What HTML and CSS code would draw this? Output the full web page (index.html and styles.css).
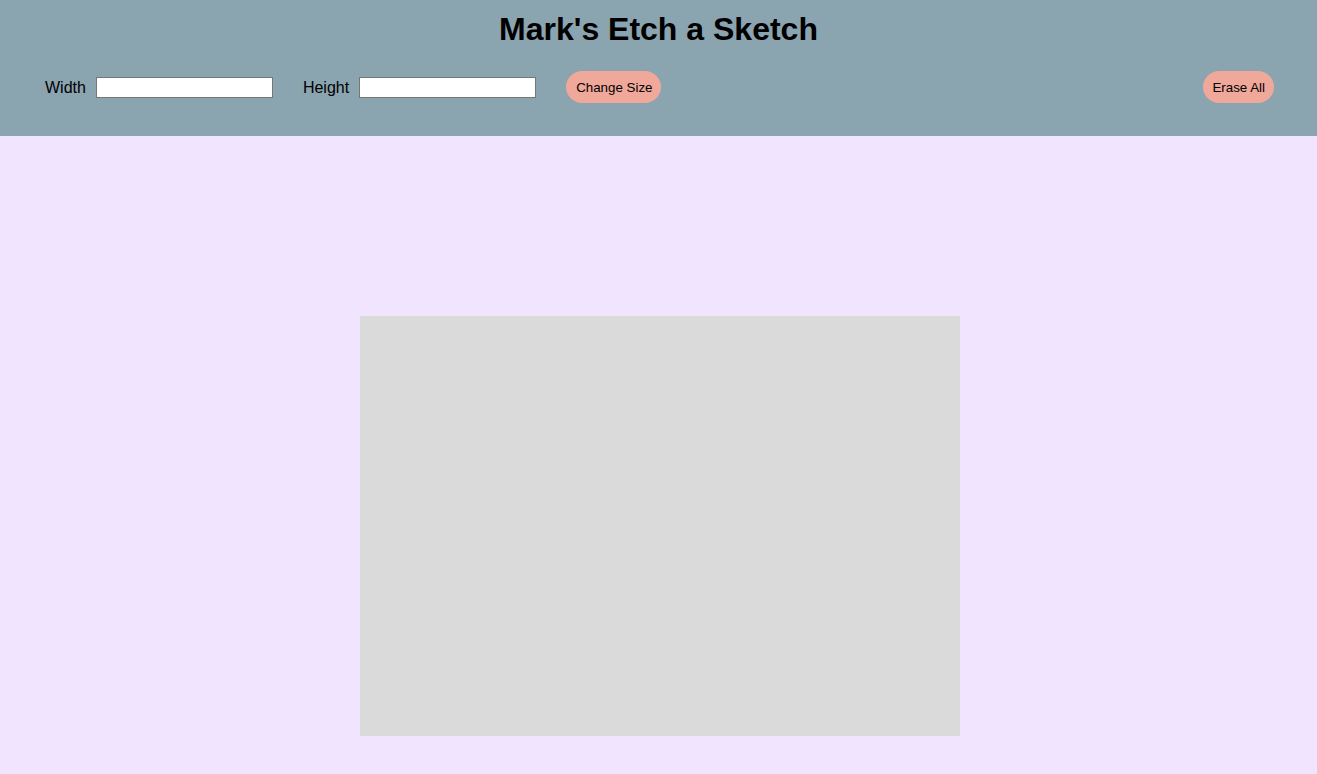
FILE: index.html
```html
<!DOCTYPE html>
<html>
<head>
<meta charset="utf-8">
<link rel="stylesheet" href="styles.css">
</head>
<body>
<header class="header">
  <h1 class="title">Mark's Etch a Sketch</h1>
  <div class="controls">
    <div class="size-group">
      <label class="label">Width</label>
      <input class="field" type="text">
      <label class="label label-gap">Height</label>
      <input class="field" type="text">
      <button class="btn btn-change">Change Size</button>
    </div>
    <button class="btn btn-erase">Erase All</button>
  </div>
</header>
<main class="main">
  <div class="canvas"></div>
</main>
</body>
</html>
```
FILE: styles.css
```css
html, body {
  margin: 0;
  padding: 0;
}
body {
  background: #f1e4ff;
  font-family: "Liberation Sans", Arial, sans-serif;
  height: 774px;
  overflow: hidden;
}
.header {
  background: #8aa4b0;
  height: 136px;
  box-sizing: border-box;
  padding-top: 11px;
}
.title {
  margin: 0;
  text-align: center;
  font-size: 32px;
  font-weight: bold;
  line-height: 37px;
  color: #000;
}
.controls {
  display: flex;
  justify-content: space-between;
  align-items: center;
  margin-top: 23px;
  padding: 0 43px 0 45px;
}
.size-group {
  display: flex;
  align-items: center;
}
.label {
  font-size: 16px;
  color: #000;
  margin-right: 10px;
  margin-top: 2px;
}
.label-gap {
  margin-left: 30px;
}
.field {
  box-sizing: border-box;
  width: 177px;
  height: 21px;
  border: 1px solid #767676;
  background: #fff;
  margin: 0;
  padding: 1px 2px;
}
.btn {
  font-family: "Liberation Sans", Arial, sans-serif;
  font-size: 13.33px;
  color: #000;
  background: #efa899;
  border: none;
  border-radius: 16px;
  height: 32px;
  padding: 0 10px;
  margin: 0;
}
.btn-change {
  margin-left: 30px;
  padding: 0 9px 0 10px;
}
.btn-erase {
  padding: 0 9px;
}
.main {
  display: flex;
  justify-content: center;
  padding-top: 180px;
  padding-left: 3px;
}
.canvas {
  width: 600px;
  height: 420px;
  background: #dadada;
}
```
